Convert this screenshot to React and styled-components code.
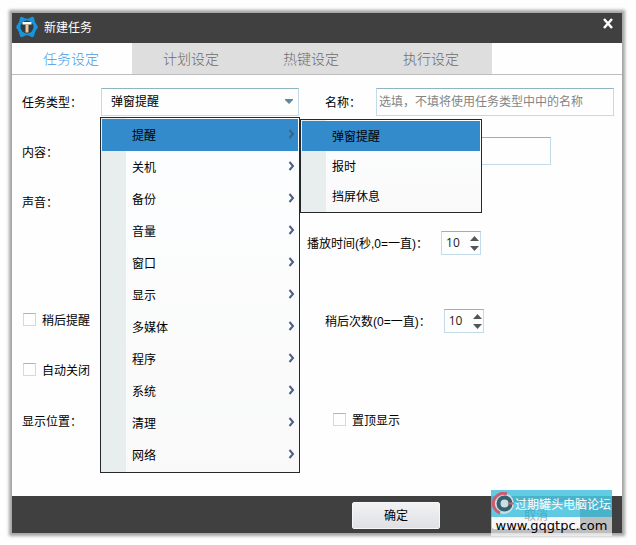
import React from "react";
import styled, { createGlobalStyle } from "styled-components";

const GlobalStyle = createGlobalStyle`
  * {
    box-sizing: border-box;
  }

  body {
    margin: 0;
    background: #fefefe;
    font-family: "Liberation Sans", "Noto Sans CJK SC", sans-serif;
    font-size: 12px;
    color: #000;
  }

  button, input, select {
    font-family: inherit;
    font-size: inherit;
    color: inherit;
    margin: 0;
  }
`;

const Page = styled.div`
  padding: 13px 14px 12px 12px;
`;

const Dialog = styled.main`
  position: relative;
  background: #fefefe;
  box-shadow: 0 0 3px 3px rgba(0, 0, 0, 0.36);
`;

const TitleBar = styled.header`
  display: flex;
  align-items: center;
  height: 30px;
  padding: 0 8px 2px 4px;
  background: #404040;
  color: #fff;
`;

const Title = styled.h1`
  flex: 1;
  margin: 0 0 0 6px;
  padding-bottom: 2px;
  font-size: 12px;
  font-weight: normal;
`;

const CloseButton = styled.button`
  display: flex;
  align-self: flex-start;
  margin-top: 5px;
  padding: 0;
  border: none;
  background: none;
  cursor: pointer;
`;

const Tabs = styled.nav`
  display: flex;
  height: 32px;
  border-bottom: 1px solid #bdbdbd;
`;

const Tab = styled.button`
  flex: 0 1 120px;
  padding: 0 2px 2px 0;
  border: none;
  background: ${(props) => (props.$active ? "#fefefe" : "#dedede")};
  color: ${(props) => (props.$active ? "#4b9ae6" : "#6c6c6c")};
  font-size: 14px;
  font-weight: 300;
  cursor: pointer;
`;

const Form = styled.form`
  padding: 13px 8px 61px 10px;
`;

const Row = styled.div`
  display: grid;
  grid-template-columns: 79px minmax(0, 198fr) 77px minmax(0, 238fr);
  align-items: center;
  height: 28px;
  margin-bottom: ${(props) => props.$gap || 0}px;
`;

const Label = styled.label`
  white-space: nowrap;
  padding-left: ${(props) => props.$indent || 0}px;
  padding-bottom: ${(props) => (props.$plain ? 0 : 2)}px;
`;

const RightGroup = styled.div`
  grid-column: 3 / 5;
  display: flex;
  align-items: center;
  gap: 13px;
  padding-left: ${(props) => props.$indent}px;
`;

const Field = styled.div`
  position: relative;
`;

const Select = styled.select`
  display: block;
  width: 100%;
  height: 28px;
  padding: 0 9px;
  border: 1px solid #c3dbe8;
  border-top-color: #8fb4c2;
  border-radius: 0;
  background: #fefefe;
  appearance: none;
`;

const SelectArrow = styled.svg`
  position: absolute;
  top: 11px;
  right: 6px;
  pointer-events: none;
`;

const TextInput = styled.input`
  width: 100%;
  height: 28px;
  padding: 0 2px;
  border: 1px solid #c3dbe8;
  border-top-color: #8fb4c2;
  background: #fefefe;

  &::placeholder {
    color: #858585;
  }
`;

const WideField = styled.div`
  grid-column: 2 / 5;
  padding-right: 63px;
`;

const Spinner = styled.div`
  display: flex;
  align-items: center;
  width: 40px;
  height: 24px;
  border: 1px solid #c3dbe8;
  border-top-color: #8fb4c2;
`;

const SpinInput = styled.input`
  flex: 1;
  min-width: 0;
  padding: 0 0 2px 4px;
  border: none;
  background: none;
  color: #222;
  font-family: "Open Sans", sans-serif;
`;

const SpinButtons = styled.div`
  display: flex;
  flex-direction: column;
`;

const SpinButton = styled.button`
  display: flex;
  align-items: center;
  height: 10px;
  padding: 0 1px;
  border: none;
  background: none;
`;

const CheckLabel = styled.label`
  display: flex;
  align-items: center;
  gap: 6px;
  padding: 0 0 4px 1px;
  white-space: nowrap;
`;

const Checkbox = styled.input`
  appearance: none;
  width: 13px;
  height: 13px;
  border: 1px solid #c9dde6;
  border-top-color: #9dbac6;
  background: #fefefe;

  &:checked {
    background: #348bcb;
  }
`;

const MenuList = styled.ul`
  position: absolute;
  z-index: 2;
  margin: 0;
  padding: 1px;
  border: 1px solid #26292c;
  list-style: none;
  background: linear-gradient(to right, #e8edee 25px, transparent 25px),
    linear-gradient(#fdfeff, #f9f9f9);
`;

const MainMenu = styled(MenuList)`
  top: 29px;
  left: -1px;
  right: -1px;
`;

const SubMenu = styled(MenuList)`
  top: 0;
  left: calc(100% + 2px);
  width: 182px;
`;

const MenuItem = styled.li`
  position: relative;
`;

const MenuButton = styled.button`
  display: flex;
  align-items: center;
  justify-content: space-between;
  width: 100%;
  height: ${(props) => (props.$sub ? 30 : 32)}px;
  padding: 0 3px 2px 30px;
  border: none;
  background: ${(props) => (props.$active ? "#348bcb" : "transparent")};
  cursor: pointer;
`;

const Footer = styled.footer`
  display: flex;
  justify-content: flex-end;
  align-items: center;
  gap: 52px;
  height: 37px;
  padding: 2px 42px 0 0;
  background: #404040;
`;

const FooterButton = styled.button`
  width: 88px;
  height: 27px;
  padding: 0 0 2px;
  border: 1px solid #f6f6f8;
  border-radius: 2px;
  background: linear-gradient(#f2f2f4, #dfe0e4);
  cursor: pointer;
`;

const Watermark = styled.div`
  position: absolute;
  right: 10px;
  bottom: -3px;
  width: 121px;
  pointer-events: none;
`;

const WatermarkTop = styled.div`
  display: flex;
  align-items: center;
  height: 27px;
  padding-left: 1px;
  background: rgba(75, 196, 224, 0.87);
  color: #fff;
  white-space: nowrap;
`;

const WatermarkUrl = styled.div`
  height: 19px;
  background: rgba(255, 255, 255, 0.66);
  font-family: "DejaVu Sans", sans-serif;
  font-size: 13px;
  line-height: 18px;
  text-align: center;
`;

const tabs = ["任务设定", "计划设定", "热键设定", "执行设定"];

const menuItems = [
  "提醒", "关机", "备份", "音量", "窗口", "显示",
  "多媒体", "程序", "系统", "清理", "网络",
];

const subItems = ["弹窗提醒", "报时", "挡屏休息"];

const Logo = () => (
  <svg width="22" height="22" viewBox="0 0 22 22" aria-hidden="true">
    <path
      d="M4 2 Q5 0 7.500 1.500 Q11 4 14.500 1.500 Q17 0 18 2 Q18.500 6 20.500 8.500 Q23 11 20.500 13.500 Q18.500 16 18 20 Q17 22 14.500 20.500 Q11 18 7.500 20.500 Q5 22 4 20 Q3.500 16 1.500 13.500 Q-1 11 1.500 8.500 Q3.500 6 4 2 Z"
      fill="#1795dc"
    />
    <circle cx="11" cy="11" r="6.500" fill="#303b43" />
    <path d="M6.500 6h9v2.500h-9z" fill="#fff" />
    <path d="M9.500 8.500h3v8h-3z" fill="#f3c88c" />
  </svg>
);

const Chevron = ({ color }) => (
  <svg width="7" height="10" viewBox="0 0 7 10" aria-hidden="true">
    <path d="M1.500 1 L5 5 L1.500 9" fill="none" stroke={color} strokeWidth="2" />
  </svg>
);

const NumberSpinner = ({ id }) => (
  <Spinner>
    <SpinInput id={id} type="text" inputMode="numeric" defaultValue="10" />
    <SpinButtons>
      <SpinButton type="button" aria-label="增加">
        <svg width="9" height="5"><path d="M0 5 L4.500 0 L9 5z" fill="#50575b" /></svg>
      </SpinButton>
      <SpinButton type="button" aria-label="减少">
        <svg width="9" height="5"><path d="M0 0 L4.500 5 L9 0z" fill="#50575b" /></svg>
      </SpinButton>
    </SpinButtons>
  </Spinner>
);

const TaskMenu = () => (
  <MainMenu role="menu">
    {menuItems.map((item, i) => (
      <MenuItem key={item} role="none">
        <MenuButton type="button" role="menuitem" $active={i === 0}>
          {item}
          <Chevron color={i === 0 ? "#3d6384" : "#4c5f86"} />
        </MenuButton>
        {i === 0 && (
          <SubMenu role="menu">
            {subItems.map((sub, j) => (
              <MenuItem key={sub} role="none">
                <MenuButton type="button" role="menuitem" $sub $active={j === 0}>
                  {sub}
                </MenuButton>
              </MenuItem>
            ))}
          </SubMenu>
        )}
      </MenuItem>
    ))}
  </MainMenu>
);

const ForumMark = () => (
  <Watermark>
    <WatermarkTop>
      <svg width="23" height="23" viewBox="0 0 23 23" aria-hidden="true">
        <circle cx="11.500" cy="11.500" r="10.500" fill="#c9dfe6" />
        <path d="M15 2 A10 10 0 0 0 8 21" fill="none" stroke="#cf5b70" strokeWidth="3" />
        <circle cx="12.500" cy="11.500" r="6" fill="none" stroke="#35606f" strokeWidth="4" />
        <path d="M16 11.500h6" stroke="#d8606c" strokeWidth="2" />
      </svg>
      过期罐头电脑论坛
    </WatermarkTop>
    <WatermarkUrl>www.gqgtpc.com</WatermarkUrl>
  </Watermark>
);

const App = () => {
  return (
    <Page>
      <GlobalStyle />
      <Dialog>
        <TitleBar>
          <Logo />
          <Title>新建任务</Title>
          <CloseButton type="button" aria-label="关闭">
            <svg width="12" height="11" viewBox="0 0 12 11">
              <path d="M2 1 L10 10 M10 1 L2 10" stroke="#fff" strokeWidth="2.500" />
            </svg>
          </CloseButton>
        </TitleBar>
        <Tabs>
          {tabs.map((tab, i) => (
            <Tab key={tab} type="button" $active={i === 0}>{tab}</Tab>
          ))}
        </Tabs>
        <Form>
          <Row $gap={21}>
            <Label htmlFor="type">任务类型：</Label>
            <Field>
              <Select id="type">
                {subItems.map((sub) => <option key={sub}>{sub}</option>)}
              </Select>
              <SelectArrow width="8" height="5">
                <path d="M0 0h8v1L4 5L0 1z" fill="#5b8ba0" />
              </SelectArrow>
              <TaskMenu />
            </Field>
            <Label htmlFor="name" $indent={26}>名称：</Label>
            <TextInput id="name" placeholder="选填，不填将使用任务类型中中的名称" />
          </Row>
          <Row $gap={22}>
            <Label htmlFor="content" $plain>内容：</Label>
            <WideField><TextInput id="content" /></WideField>
          </Row>
          <Row $gap={14}>
            <Label as="span" $plain>声音：</Label>
          </Row>
          <Row $gap={50}>
            <RightGroup $indent={8}>
              <Label htmlFor="duration">播放时间(秒,0=一直)：</Label>
              <NumberSpinner id="duration" />
            </RightGroup>
          </Row>
          <Row $gap={22}>
            <CheckLabel><Checkbox type="checkbox" />稍后提醒</CheckLabel>
            <RightGroup $indent={26}>
              <Label htmlFor="count">稍后次数(0=一直)：</Label>
              <NumberSpinner id="count" />
            </RightGroup>
          </Row>
          <Row $gap={22}>
            <CheckLabel><Checkbox type="checkbox" />自动关闭</CheckLabel>
          </Row>
          <Row>
            <Label as="span">显示位置：</Label>
            <RightGroup $indent={33}>
              <CheckLabel><Checkbox type="checkbox" />置顶显示</CheckLabel>
            </RightGroup>
          </Row>
        </Form>
        <Footer>
          <FooterButton type="button">确定</FooterButton>
          <FooterButton type="button">取消</FooterButton>
        </Footer>
        <ForumMark />
      </Dialog>
    </Page>
  );
};

export default App;
